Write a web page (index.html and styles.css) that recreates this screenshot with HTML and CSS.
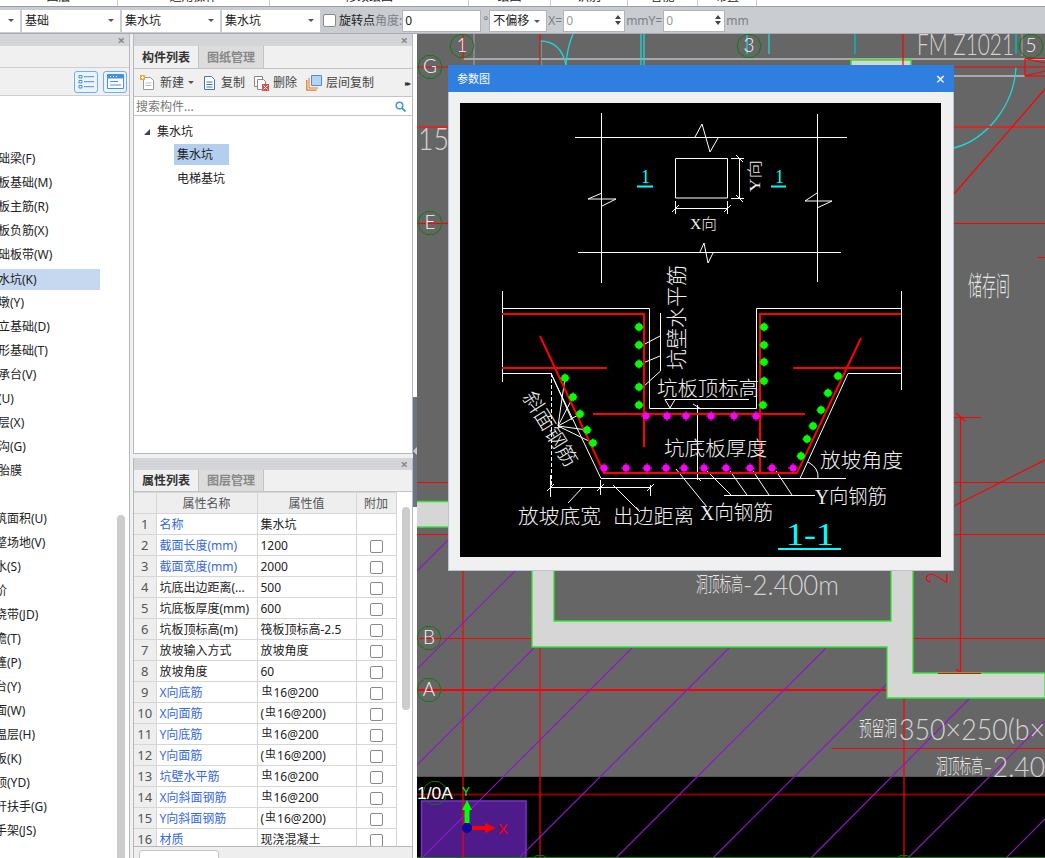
FILE: index.html
```html
<!DOCTYPE html>
<html lang="zh-CN">
<head>
<meta charset="utf-8">
<title>参数图</title>
<link rel="stylesheet" href="styles.css">
</head>
<body>
<div class="page">
  <div class="topstrip">
    <div class="strip-tab w118"><span>图层</span></div>
    <div class="strip-tab w152"><span>通用操作</span></div>
    <div class="strip-tab w199"><span>修改绘图</span></div>
    <div class="strip-tab w82"><span>绘图</span></div>
    <div class="strip-tab w77"><span>识别</span></div>
    <div class="strip-tab w70"><span>智能</span></div>
    <div class="strip-tab w59"><span>布置</span></div>
  </div>
  <div class="toolbar">
    <div class="sel w20"><i class="caret"></i></div>
    <div class="sel w99"><span>基础</span><i class="caret"></i></div>
    <div class="sel w99"><span>集水坑</span><i class="caret"></i></div>
    <div class="sel w99"><span>集水坑</span><i class="caret"></i></div>
    <label class="tb-check"><i class="box"></i><span>旋转点</span></label>
    <span class="muted tight">角度:</span>
    <div class="field w80 tight">0</div>
    <span class="muted deg">°</span>
    <div class="sel w58 narrow"><span>不偏移</span><i class="caret"></i></div>
    <span class="muted eq">X=</span>
    <div class="field w62 gray">0<i class="spin"></i></div>
    <span class="muted eq">mmY=</span>
    <div class="field w62 gray">0<i class="spin"></i></div>
    <span class="muted eq">mm</span>
  </div>

  <div class="main">
    <aside class="left">
      <div class="panel-head"><span class="x">×</span></div>
      <div class="left-tabs"></div>
      <div class="left-tools">
        <button class="view-btn" type="button">
          <svg width="17" height="15" viewBox="0 0 17 15"><path d="M1 1.5h3v2.5H1zM1 6.5h3V9H1zM1 11.500h3V14H1zM6 2.700h10M6 7.700h10M6 12.700h10" fill="none" stroke="#4a90d9"/></svg>
        </button>
        <button class="view-btn" type="button">
          <svg width="17" height="15" viewBox="0 0 17 15"><path d="M.5.5h16v14H.5z" fill="#fff" stroke="#4a90d9"/><path d="M1 1h15v3.500H1z" fill="#4a90d9"/><path d="M3 7.500h8M3 11h11" stroke="#4a90d9"/><path d="M3 2.500h1M6 2.500h1M9 2.500h1" stroke="#fff"/></svg>
        </button>
      </div>
      <div class="left-body">
        <ul class="tree-list">
          <li>基础梁(F)</li>
          <li>筏板基础(M)</li>
          <li>筏板主筋(R)</li>
          <li>筏板负筋(X)</li>
          <li>基础板带(W)</li>
          <li class="current"><span>集水坑(K)</span></li>
          <li>柱墩(Y)</li>
          <li>独立基础(D)</li>
          <li>条形基础(T)</li>
          <li>桩承台(V)</li>
          <li>桩(U)</li>
          <li>垫层(X)</li>
          <li>地沟(G)</li>
          <li>砖胎膜</li>
          <li class="blank"></li>
          <li class="far">建筑面积(U)</li>
          <li class="far">平整场地(V)</li>
          <li class="far">散水(S)</li>
          <li class="far">台阶</li>
          <li class="far">后浇带(JD)</li>
          <li class="far">挑檐(T)</li>
          <li class="far">雨篷(P)</li>
          <li class="far">阳台(Y)</li>
          <li class="far">屋面(W)</li>
          <li class="far">保温层(H)</li>
          <li class="far">栏板(K)</li>
          <li class="far">压顶(YD)</li>
          <li class="far">栏杆扶手(G)</li>
          <li class="far">脚手架(JS)</li>
        </ul>
        <div class="left-rail"></div>
      </div>
    </aside>

    <section class="mid">
      <div class="mid-top">
        <div class="panel-head"><span class="x">×</span></div>
        <div class="tabs">
          <div class="tab on">构件列表</div>
          <div class="tab">图纸管理</div>
        </div>
        <div class="actions">
          <span class="act a-new">
            <svg width="15" height="16" viewBox="0 0 15 16"><path d="M3.500 2.500h7l3 3v9h-10z" fill="#fff" stroke="#999"/><path d="M5.500 8h6M5.500 10.500h6" stroke="#bbb"/><path d="M0 0h5v5H0z" fill="#f6a623"/><path d="M1 2.500h3M2.500 1v3" stroke="#fff"/></svg>
            新建<i class="caret c-act"></i>
          </span>
          <span class="act">
            <svg width="14" height="16" viewBox="0 0 14 16"><path d="M1.500 1.500h7l3 3v10h-10z" fill="#fff" stroke="#3f78b5"/><path d="M3.500 7h6M3.500 9.500h6M3.500 12h6" stroke="#3f78b5"/></svg>
            复制
          </span>
          <span class="act">
            <svg width="15" height="16" viewBox="0 0 15 16"><path d="M.5 1.500h8v10h-8z" fill="#fff" stroke="#888"/><path d="M3.500 4.500h6l2 2v8h-8z" fill="#fff" stroke="#888"/><path d="M8 9h7v7H8z" fill="#e14b4b"/><path d="M9.500 10.500l4 4M13.500 10.500l-4 4" stroke="#fff"/></svg>
            删除
          </span>
          <span class="act">
            <svg width="16" height="16" viewBox="0 0 16 16"><path d="M.8 5v10.200h10" fill="none" stroke="#e87b1e" stroke-width="1.300"/><path d="M3 3v10h9" fill="none" stroke="#e87b1e"/><path d="M5.500.5h10v10h-10z" fill="#b7d3f2" stroke="#4d8fd6"/></svg>
            层间复制
          </span>
          <span class="more">▸▸</span>
        </div>
        <div class="search">
          <span>搜索构件...</span>
          <svg width="11" height="11" viewBox="0 0 11 11"><circle cx="4.500" cy="4.500" r="3.300" fill="none" stroke="#3f9ad6" stroke-width="1.500"/><path d="M7 7l3.500 3.500" stroke="#3f9ad6" stroke-width="1.800"/></svg>
        </div>
        <div class="parts">
          <div class="part-root"><i class="tri"></i>集水坑</div>
          <div class="part sel-part">集水坑</div>
          <div class="part">电梯基坑</div>
        </div>
      </div>

      <div class="mid-bottom">
        <div class="panel-head"><span class="x">×</span></div>
        <div class="tabs t2">
          <div class="tab on">属性列表</div>
          <div class="tab">图层管理</div>
        </div>
        <div class="props-wrap">
          <table class="props">
            <colgroup><col class="c1"><col class="c2"><col class="c3"><col class="c4"></colgroup>
            <thead><tr><th></th><th>属性名称</th><th>属性值</th><th>附加</th></tr></thead>
            <tbody>
              <tr><td class="n">1</td><td class="link">名称</td><td>集水坑</td><td></td></tr>
              <tr><td class="n">2</td><td class="link">截面长度(mm)</td><td>1200</td><td><i class="box"></i></td></tr>
              <tr><td class="n">3</td><td class="link">截面宽度(mm)</td><td>2000</td><td><i class="box"></i></td></tr>
              <tr><td class="n">4</td><td>坑底出边距离(...</td><td>500</td><td><i class="box"></i></td></tr>
              <tr><td class="n">5</td><td>坑底板厚度(mm)</td><td>600</td><td><i class="box"></i></td></tr>
              <tr><td class="n">6</td><td>坑板顶标高(m)</td><td>筏板顶标高-2.5</td><td><i class="box"></i></td></tr>
              <tr><td class="n">7</td><td>放坡输入方式</td><td>放坡角度</td><td><i class="box"></i></td></tr>
              <tr><td class="n">8</td><td>放坡角度</td><td>60</td><td><i class="box"></i></td></tr>
              <tr><td class="n">9</td><td class="link">X向底筋</td><td><b class="rb">虫</b>16@200</td><td><i class="box"></i></td></tr>
              <tr><td class="n">10</td><td class="link">X向面筋</td><td>(<b class="rb">虫</b>16@200)</td><td><i class="box"></i></td></tr>
              <tr><td class="n">11</td><td class="link">Y向底筋</td><td><b class="rb">虫</b>16@200</td><td><i class="box"></i></td></tr>
              <tr><td class="n">12</td><td class="link">Y向面筋</td><td>(<b class="rb">虫</b>16@200)</td><td><i class="box"></i></td></tr>
              <tr><td class="n">13</td><td class="link">坑壁水平筋</td><td><b class="rb">虫</b>16@200</td><td><i class="box"></i></td></tr>
              <tr><td class="n">14</td><td class="link">X向斜面钢筋</td><td><b class="rb">虫</b>16@200</td><td><i class="box"></i></td></tr>
              <tr><td class="n">15</td><td class="link">Y向斜面钢筋</td><td>(<b class="rb">虫</b>16@200)</td><td><i class="box"></i></td></tr>
              <tr><td class="n">16</td><td class="link">材质</td><td>现浇混凝土</td><td><i class="box"></i></td></tr>
            </tbody>
          </table>
          <div class="props-rail"><div class="thumb"></div></div>
        </div>
        <div class="props-foot"><div class="foot-tab"></div></div>
      </div>
    </section>

    <div class="splitter"><div class="grip"><i></i></div></div>

    <div class="canvas">
      <svg class="drawing" width="628" height="824" viewBox="417 34 628 824">
        <defs>
          <polygon id="ring" points="12,0 9.700,7.100 3.700,11.400 -3.700,11.400 -9.700,7.100 -12,0 -9.700,-7.100 -3.700,-11.400 3.700,-11.400 9.700,-7.100" fill="none" stroke="#0b7d0b"/>
        </defs>
        <rect x="417" y="34" width="628" height="824" fill="#666"/>
        <rect x="417" y="777" width="628" height="81" fill="#000"/>
        <path d="M417 776.500H1045" stroke="#555"/>
        <path d="M417 794.500H1045" stroke="#8b0000" stroke-width="2"/>
        <path d="M421.500 858V801H526V858" fill="#4f1a8a" stroke="#7a2fd2" stroke-width="1.500"/>

        <g fill="none" stroke="#a9a9a9" stroke-width="2">
          <path d="M462 59H1045M954 76H1025"/>
          <path d="M474 34V65M1022 34V56" stroke-width="1"/>
        </g>
        <path d="M851 60H911V70H851z" fill="#d6d6d6" stroke="#2fe62f" stroke-width="1.500"/>

        <g fill="none" stroke="#1fd6d6" stroke-width="1.300">
          <path d="M641 34V65M644 34V65M769 34V54M747 34V54M541 41V65"/>
          <path d="M1016 34V54" stroke="#1aa5a5" stroke-width="2"/>
          <path d="M855 34V54" stroke="#1aa5a5" stroke-width="2"/>
          <path d="M573 34Q567 48 566 65"/>
          <path d="M540 41Q561 41 566 65"/>
          <path d="M1016 67C1014 107 985 140 954 148"/>
        </g>

        <g fill="none" stroke="#f00" stroke-width="1.200">
          <path d="M540 34V65M903 34V65M463 34V60"/>
          <path d="M417 67H448M954 67H1045M1025 58.500H1045M1025 58.500V76H1045M1025 58.500L1045 63M1025 76L1045 71"/>
          <path d="M954 127H1045" stroke="#d62a2a" stroke-width="2"/>
          <path d="M1045 89L954 194"/>
          <path d="M954 223.500H1045M1038 257.500H1045"/>
          <path d="M417 223.500H448"/>
          <path d="M417 127H448" stroke="#d62a2a" stroke-width="2"/>
          <path d="M417 482.500H448M417 534.500H448"/>
          <path d="M954 482.500H1045M954 534.500H1045M913 638.500H1045"/>
          <path d="M1045 460L954 506"/>
          <path d="M960.500 417V673M954 417.500H981M956 413L965 421M956 669L965 677"/>
          <path d="M463 571V858M540 647V857M904 698V858"/>
          <path d="M417 638.500H532M832 748.500H1045"/>
          <path d="M417 690H887" stroke-width="2"/>
        </g>

        <g fill="none" stroke="#8f19c4" stroke-width="1.200">
          <path d="M448 540L417 571M515 571L417 669M534 648L417 765M632 648L422 858M729 648L519 858M826 648L616 858M887 684L713 858M970 698L811 858M1045 721L908 858M1045 819L1006 858"/>
        </g>

        <path d="M532 560V647H887V698H1045V673H913V560H891V621H554V560z" fill="#d6d6d6" stroke="#2fe62f" stroke-width="1.300"/>
        <path d="M417 501.500H448V527H417z" fill="#d6d6d6"/>
        <path d="M417 501.500H448M417 527H448" stroke="#2fe62f" stroke-width="1.300"/>
        <path d="M938 673.500H981" stroke="#f00" stroke-width="1.200"/>

        <text class="red-num" transform="translate(948 584) rotate(-90) scale(1 1.600)">2</text>

        <g>
          <use href="#ring" x="462" y="46"/>
          <use href="#ring" x="430" y="67"/>
          <use href="#ring" x="749" y="46"/>
          <use href="#ring" x="1031" y="46"/>
          <use href="#ring" x="430" y="223"/>
          <use href="#ring" x="429" y="638"/>
          <use href="#ring" x="429" y="690"/>
          <use href="#ring" x="435" y="793"/>
          <use href="#ring" x="540" y="867"/>
          <use href="#ring" x="904" y="867"/>
        </g>
        <path d="M417 857.500H1045" stroke="#0b7d0b"/>

        <g class="grid-txt">
          <text x="462" y="52" text-anchor="middle">1</text>
          <text x="430" y="73" text-anchor="middle">G</text>
          <text x="749" y="52" text-anchor="middle">3</text>
          <text x="1031" y="52" text-anchor="middle">5</text>
          <text x="430" y="229" text-anchor="middle">E</text>
          <text x="429" y="644" text-anchor="middle">B</text>
          <text x="429" y="696" text-anchor="middle">A</text>
        </g>
        <text class="axis-label" x="417" y="799" textLength="36" lengthAdjust="spacingAndGlyphs">1/0A</text>
        <text class="thin-big" x="418" y="150" font-size="32" textLength="31" lengthAdjust="spacingAndGlyphs">15</text>
        <text class="thin-big" x="917" y="55" font-size="30" textLength="97" lengthAdjust="spacingAndGlyphs">FM Z1021</text>

        <text class="tall" transform="translate(968 296) scale(1 2.300)" textLength="42" lengthAdjust="spacingAndGlyphs">储存间</text>

        <text class="tall" transform="translate(696 592) scale(1 1.700)" textLength="47" lengthAdjust="spacingAndGlyphs">洞顶标高</text>
        <text class="thin-big" x="743" y="595" font-size="27" textLength="96" lengthAdjust="spacingAndGlyphs">-2.400m</text>

        <text class="tall" transform="translate(859 736) scale(1 1.700)" textLength="38" lengthAdjust="spacingAndGlyphs">预留洞</text>
        <text class="thin-big" x="899" y="740" font-size="29" textLength="146" lengthAdjust="spacingAndGlyphs">350×250(b×</text>

        <text class="tall" transform="translate(936 774) scale(1 1.700)" textLength="47" lengthAdjust="spacingAndGlyphs">洞顶标高</text>
        <text class="thin-big" x="983" y="777" font-size="27" textLength="62" lengthAdjust="spacingAndGlyphs">-2.40</text>

        <path d="M467 809V823" stroke="#0f0" stroke-width="5"/>
        <path d="M467 800L472 810H462z" fill="#0f0"/>
        <path d="M472 828H486" stroke="#f00" stroke-width="4"/>
        <path d="M496 828L485 823V833z" fill="#f00"/>
        <circle cx="467" cy="828" r="5" fill="#0a0a9e"/>
        <text class="axis-y" x="462" y="796">Y</text>
        <text class="axis-x" x="498" y="834">X</text>
      </svg>
    </div>
  </div>

  <div class="dialog">
    <div class="dialog-head"><span>参数图</span><span class="dialog-x">×</span></div>
    <div class="dialog-body">
      <svg class="param" width="481" height="454" viewBox="460 103 481 454">
        <defs>
          <g id="gd"><circle r="3.800" fill="#0f0"/><path d="M-4.700 0H4.700M0-4.700V4.700" stroke="#0f0"/></g>
          <g id="md"><circle r="3.500" fill="#f0f"/><path d="M-5 0H5M0-5V5" stroke="#f0f"/></g>
        </defs>
        <rect x="460" y="103" width="481" height="454" fill="#000"/>

        <g fill="none" stroke="#fff" stroke-width="1">
          <path d="M601.500 113V283M817.500 114V282M575 137.500H847M578 252.500H841"/>
          <path d="M695 137L702 124L710 152L718 138M700 252L704 243L708 263L713 253"/>
          <path d="M602 193L588 199H616L602 206M817 193L805 201H832L817 208"/>
          <path d="M675.500 158.500H727.500V198H675.500z"/>
          <path d="M675 208.500H727M675.500 201V214M727.500 201V214M672 212L679 205M724 212L731 205"/>
          <path d="M739.500 158V198M731 158.500H744M731 198.500H744M736 155L743 162M736 195L743 202"/>

          <path d="M502.500 291V382M901.500 291V390"/>
          <path d="M502 308.500H649.500V408.500H756.500V308.500H901"/>
          <path d="M502 373.500H551L601 478.500H800L848 373.500H901M800 478.500H846"/>
          <path d="M660.500 313V371L643 387M660 336L643 345M660 356L643 363"/>
          <path d="M551.500 373V487" stroke-dasharray="4 2"/>
          <path d="M550 487.500H650M550.500 475V497M600.500 480V495M650.500 485V496M547 491L554 484M597 491L604 484M647 491L654 484"/>
          <path d="M582 488L568 503M613 485L640 512"/>
          <path d="M665 399.500H749M665 399.500L670 408L675 399.500"/>
          <path d="M697.500 405V480M693 404L701 409M697 477L701 481"/>
          <path d="M724 495.500H815M707 471L731 495M730 471L747 495M753 471L769 495M776 471L792 495"/>
          <path d="M676 469L707 507"/>
          <path d="M808 462Q819 468 818 478"/>
          <path d="M558 426L565 378M558 426L573 397M558 426L580 414M558 426L587 430M558 426L593 443M551 373L572 420"/>
        </g>

        <g fill="none" stroke="#f00" stroke-width="2">
          <path d="M502 314H644V447M901 314H760V473"/>
          <path d="M502 368H607M793 368H901"/>
          <path d="M593 414H805"/>
          <path d="M540 336L604 473H797L861 338"/>
        </g>

        <use href="#gd" x="639" y="327"/><use href="#gd" x="639" y="345"/><use href="#gd" x="639" y="364"/><use href="#gd" x="639" y="387"/><use href="#gd" x="639" y="405"/>
        <use href="#gd" x="764" y="327"/><use href="#gd" x="764" y="345"/><use href="#gd" x="764" y="362"/><use href="#gd" x="764" y="381"/><use href="#gd" x="763" y="405"/>
        <use href="#gd" x="565" y="378"/><use href="#gd" x="573" y="397"/><use href="#gd" x="580" y="414"/><use href="#gd" x="587" y="430"/><use href="#gd" x="593" y="443"/>
        <use href="#gd" x="838" y="376"/><use href="#gd" x="828" y="393"/><use href="#gd" x="821" y="410"/><use href="#gd" x="813" y="426"/><use href="#gd" x="807" y="439"/><use href="#gd" x="801" y="456"/>

        <use href="#md" x="646" y="416"/><use href="#md" x="667" y="416"/><use href="#md" x="686" y="416"/><use href="#md" x="711" y="416"/><use href="#md" x="734" y="416"/><use href="#md" x="756" y="416"/>
        <use href="#md" x="604" y="468"/><use href="#md" x="626" y="468"/><use href="#md" x="647" y="468"/><use href="#md" x="666" y="468"/><use href="#md" x="684" y="468"/><use href="#md" x="704" y="468"/><use href="#md" x="726" y="468"/><use href="#md" x="750" y="468"/><use href="#md" x="772" y="468"/><use href="#md" x="793" y="468"/>

        <g class="cad">
          <text x="690" y="229" font-size="15" textLength="27" lengthAdjust="spacingAndGlyphs">X向</text>
          <text transform="translate(760 192) rotate(-90)" font-size="15" textLength="32" lengthAdjust="spacingAndGlyphs">Y向</text>
          <text transform="translate(684 370) rotate(-90)" font-size="21" textLength="105" lengthAdjust="spacingAndGlyphs">坑壁水平筋</text>
          <text x="657" y="396" font-size="20" textLength="102" lengthAdjust="spacingAndGlyphs">坑板顶标高</text>
          <text x="664" y="456" font-size="20" textLength="103" lengthAdjust="spacingAndGlyphs">坑底板厚度</text>
          <text x="820" y="468" font-size="20" textLength="83" lengthAdjust="spacingAndGlyphs">放坡角度</text>
          <text x="815" y="504" font-size="20" textLength="72" lengthAdjust="spacingAndGlyphs">Y向钢筋</text>
          <text x="518" y="524" font-size="20" textLength="83" lengthAdjust="spacingAndGlyphs">放坡底宽</text>
          <text x="613" y="524" font-size="20" textLength="81" lengthAdjust="spacingAndGlyphs">出边距离</text>
          <text x="700" y="520" font-size="20" textLength="73" lengthAdjust="spacingAndGlyphs">X向钢筋</text>
          <text transform="translate(522 397) rotate(58)" font-size="20" textLength="84" lengthAdjust="spacingAndGlyphs">斜面钢筋</text>
        </g>
        <g class="cyan">
          <text x="641" y="183" font-size="18">1</text>
          <text x="775" y="183" font-size="18">1</text>
          <text x="786" y="545" font-size="32" textLength="48" lengthAdjust="spacingAndGlyphs">1-1</text>
        </g>
        <path d="M637 186.500H653M771 186.500H786" stroke="#0ff" stroke-width="2"/>
        <path d="M778 549H841" stroke="#0ff" stroke-width="2"/>
      </svg>
    </div>
  </div>
</div>
</body>
</html>
```
FILE: styles.css
```css
* { box-sizing: border-box; }
html, body { margin: 0; padding: 0; }
body {
  font-family: "Noto Sans", "Noto Sans CJK SC", sans-serif;
  font-size: 12px;
  line-height: 16px;
  color: #222;
  background: #eef0f2;
}
.page {
  position: relative;
  width: 1045px;
  height: 858px;
  overflow: hidden;
  display: flex;
  flex-direction: column;
}

/* top strip */
.topstrip {
  flex: 0 0 7px;
  display: flex;
  background: #fff;
  border-bottom: 1px solid #9b9ea3;
  overflow: hidden;
}
.strip-tab {
  height: 6px;
  overflow: hidden;
  border-right: 1px solid #c9ccd1;
  text-align: center;
}
.strip-tab span { display: block; margin-top: -11px; line-height: 16px; }
.w118 { width: 118px; }
.w152 { width: 152px; }
.w199 { width: 199px; }
.w82 { width: 82px; }
.w77 { width: 77px; }
.w70 { width: 70px; }
.w59 { width: 59px; }

/* toolbar */
.toolbar {
  flex: 0 0 27px;
  display: flex;
  align-items: center;
  gap: 2px;
  background: #c9ccd1;
  border-bottom: 1px solid #a8abb0;
  padding-top: 1px;
}
.sel {
  position: relative;
  height: 22px;
  background: #fff;
  display: flex;
  align-items: center;
  padding-left: 3px;
  font-size: 12px;
}
.sel .caret { position: absolute; right: 6px; top: 9px; }
.caret {
  display: inline-block;
  width: 0; height: 0;
  border-left: 3.500px solid transparent;
  border-right: 3.500px solid transparent;
  border-top: 3.500px solid #555;
}
.w20 { width: 20px; }
.w99 { width: 98px; }
.w58 { width: 58px; border: 1px solid #b0b3b8; }
.w80 { width: 79px; }
.w62 { width: 62px; }
.tb-check { display: flex; align-items: center; gap: 3px; margin-left: 1px; }
.tight { margin-left: -2px; }
.box {
  display: inline-block;
  width: 13px; height: 13px;
  background: #fff;
  border: 1px solid #8a8a8a;
  border-radius: 2px;
  vertical-align: middle;
}
.muted { color: #7c7f84; }
.deg { width: 4px; }
.eq { margin: 0 -1px; }
.field {
  position: relative;
  height: 22px;
  background: #fff;
  border: 1px solid #b0b3b8;
  padding-left: 2px;
  display: flex;
  align-items: center;
  font-size: 12px;
}
.field.gray { color: #999; }
.spin {
  position: absolute;
  right: 3px;
  top: 4px;
  width: 0; height: 0;
  border-left: 3px solid transparent;
  border-right: 3px solid transparent;
  border-bottom: 4px solid #444;
}
.spin::after {
  content: "";
  position: absolute;
  left: -3px;
  top: 6px;
  border-left: 3px solid transparent;
  border-right: 3px solid transparent;
  border-top: 4px solid #444;
}

/* main */
.main { flex: 1; display: flex; min-height: 0; }
.panel-head {
  height: 12px;
  background: #d3d5d9;
  display: flex;
  justify-content: flex-end;
  align-items: center;
  padding-right: 4px;
}
.x { color: #888; font-size: 13px; line-height: 12px; font-weight: 700; }

/* left */
.left {
  width: 130px;
  display: flex;
  flex-direction: column;
  border-right: 1px solid #b6b8bc;
  background: #f0f0f0;
}
.left-tabs { height: 22px; border-bottom: 1px solid #cfcfcf; }
.left-tools {
  height: 28px;
  display: flex;
  justify-content: flex-end;
  align-items: center;
  gap: 5px;
  padding-right: 2px;
  border-bottom: 1px solid #cfcfcf;
}
.view-btn {
  width: 24px;
  height: 22px;
  padding: 0;
  background: #eaf4fe;
  border: 1px solid #6ab0f5;
  border-radius: 3px;
  display: flex;
  align-items: center;
  justify-content: center;
}
.left-body { flex: 1; display: flex; background: #fff; min-height: 0; padding-right: 4px; }
.tree-list { flex: 1; list-style: none; margin: 0; padding: 51px 0 0; overflow: hidden; min-width: 0; }
.tree-list li {
  height: 24px;
  line-height: 24px;
  margin-left: -14px;
  white-space: nowrap;
  font-size: 12px;
}
.tree-list li.far { margin-left: -17px; }
.tree-list li.current {
  margin-left: 0;
  width: 100px;
  height: 21px;
  margin-top: 2px;
  margin-bottom: 1px;
  line-height: 21px;
  background: #c6d8f0;
  overflow: hidden;
}
.tree-list li.current span { display: block; margin-left: -14px; }
.left-rail { width: 8px; height: 343px; align-self: flex-end; background: #ccc; border-radius: 4px 4px 0 0; }

/* mid */
.mid { width: 280px; margin-left: 3px; display: flex; flex-direction: column; gap: 4px; }
.mid-top {
  height: 420px;
  flex: none;
  display: flex;
  flex-direction: column;
  background: #fff;
  border-right: 1px solid #b6b8bc;
  border-left: 1px solid #b6b8bc;
  border-bottom: 1px solid #b6b8bc;
}
.tabs {
  height: 23px;
  display: flex;
  background: #f0f0f0;
  border-bottom: 1px solid #c4c4c4;
}
.tab {
  width: 65px;
  text-align: center;
  line-height: 23px;
  background: #dcdcdc;
  color: #888;
  font-weight: 700;
  font-size: 12px;
  border-right: 1px solid #c4c4c4;
}
.tab.on { background: #f0f0f0; color: #333; }
.actions {
  height: 28px;
  display: flex;
  align-items: center;
  padding-left: 6px;
  background: #f0f0f0;
  border-bottom: 1px solid #c4c4c4;
  gap: 9px;
  position: relative;
}
.act { display: inline-flex; align-items: center; gap: 4px; color: #444; }
.a-new { gap: 5px; }
.c-act { margin-left: -1px; }
.more { margin-left: auto; margin-right: 3px; font-size: 8px; color: #333; letter-spacing: -2px; }
.search {
  height: 19px;
  display: flex;
  align-items: center;
  justify-content: space-between;
  padding: 1px 6px 0 2px;
  color: #777;
  border-bottom: 1px solid #c4c4c4;
  font-size: 12px;
}
.parts { flex: 1; padding: 5px 0 0 23px; }
.part-root { height: 21px; line-height: 21px; position: relative; margin-bottom: 2px; }
.tri {
  position: absolute;
  left: -13px;
  top: 8px;
  width: 0; height: 0;
  border-left: 6px solid transparent;
  border-bottom: 6px solid #444;
}
.part { height: 21px; line-height: 21px; margin: 0 0 3px 17px; width: 55px; padding-left: 3px; white-space: nowrap; }
.sel-part { background: #b3ceee; }

.mid-bottom { flex: 1; min-height: 0; display: flex; flex-direction: column; background: #f0f0f0; border-left: 1px solid #b6b8bc; border-right: 1px solid #b6b8bc; }
.t2 { height: 22px; }
.t2 .tab { line-height: 22px; }
.props-wrap { display: flex; flex: none; background: #fff; height: 355px; overflow: hidden; border-bottom: 1px solid #b6b8bc; }
.props { width: 262px; table-layout: fixed; border-collapse: collapse; flex: none; font-size: 12px; align-self: flex-start; }
.c1 { width: 22px; }
.c2 { width: 101px; }
.c3 { width: 99px; }
.c4 { width: 40px; }
.props th, .props td {
  height: 21px;
  padding: 0 0 0 3px;
  border: 1px solid #d6d6d6;
  font-weight: 400;
  white-space: nowrap;
  overflow: hidden;
  line-height: 19px;
}
.props thead th { background: #eeeeee; color: #555; text-align: center; padding: 0; height: 21px; }
.props th:first-child, .props td:first-child { border-left: 0; }
.props tbody td:nth-child(3) { padding-left: 3px; }
.props tbody td:last-child { text-align: center; padding: 0; }
.props .n { background: #eeeeee; text-align: center; padding: 0; color: #555; font-size: 13px; }
.link { color: #3668e6; }
.rb { font-weight: 400; font-size: 11px; position: relative; top: -2px; margin: 0 1px; }
.props-rail { flex: 1; padding: 15px 3px 0 5px; }
.thumb { height: 203px; width: 8px; background: #ccc; border-radius: 4px; }
.props-foot { flex: 1; padding: 3px 0 0 5px; background: #eeeeee; }
.foot-tab { width: 80px; height: 12px; background: #fff; border: 1px solid #c4c4c4; border-radius: 3px 3px 0 0; }

.splitter { width: 4px; position: relative; background: #fff; border-right: 0; }
.grip {
  position: absolute;
  top: 363px;
  left: 0;
  width: 4px;
  height: 110px;
  background: #6b7280;
}
.grip i {
  position: absolute;
  top: 50px;
  left: 0;
  width: 0; height: 0;
  border-top: 4px solid transparent;
  border-bottom: 4px solid transparent;
  border-right: 4px solid #c8ccd2;
}

/* canvas */
.canvas { flex: 1; min-width: 0; overflow: hidden; background: #666; }
.drawing { display: block; }
.grid-txt text { font-family: "Lato", "Liberation Sans", sans-serif; font-weight: 300; font-size: 19px; fill: #f4f4f4; }
.axis-label { font-family: "Liberation Sans", sans-serif; font-size: 17px; fill: #fff; }
.thin-big { font-family: "Lato", "Liberation Sans", sans-serif; fill: #d4d4d4; font-weight: 300; }
.tall { font-family: "Noto Sans CJK SC", sans-serif; font-size: 12px; font-weight: 300; fill: #e8e8e8; }
.red-num { font-family: "Lato", "Liberation Sans", sans-serif; font-weight: 300; font-size: 20px; fill: #f00; }
.axis-y { font-family: "Liberation Sans", sans-serif; font-size: 12px; fill: #0f0; }
.axis-x { font-family: "Liberation Sans", sans-serif; font-size: 15px; fill: #f00; }

/* dialog */
.dialog {
  position: absolute;
  left: 448px;
  top: 65px;
  width: 506px;
  height: 506px;
  background: #f0f0f0;
  border: 1px solid #b9c4d4;
  border-top: 0;
}
.dialog-head {
  height: 27px;
  margin: 0 -1px;
  background: #2f7fe1;
  color: #fff;
  display: flex;
  align-items: center;
  justify-content: space-between;
  padding: 0 9px;
  font-size: 11px;
}
.dialog-x { font-size: 16px; line-height: 16px; }
.dialog-body { padding: 11px 0 0 11px; }
.param { display: block; }
.cad text { font-family: "Liberation Serif", "Noto Sans CJK SC", sans-serif; font-weight: 300; fill: #f0f0f0; }
.cyan text { font-family: "Liberation Serif", serif; fill: #0ff; }
```
